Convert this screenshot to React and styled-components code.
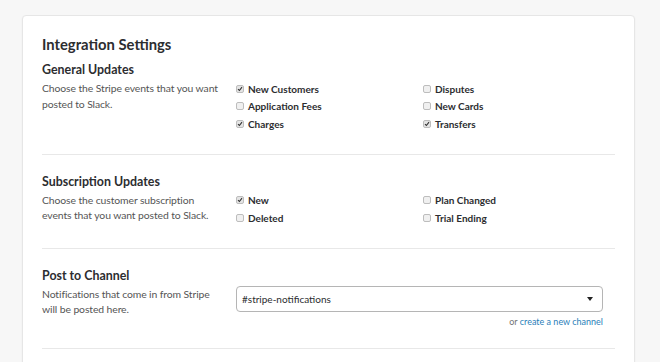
import React from "react";
import styled, { createGlobalStyle } from "styled-components";

const GlobalStyle = createGlobalStyle`
  html, body {
    margin: 0;
    padding: 0;
    background: #f7f7f7;
    font-family: Lato, "Liberation Sans", sans-serif;
    color: #2c2d30;
  }
`;

const Page = styled.div`
  padding: 15px 25px 0 22px;
  height: 362px;
  box-sizing: border-box;
  overflow: hidden;
`;

const Card = styled.div`
  width: 613px;
  box-sizing: border-box;
  background: #fff;
  border: 1px solid #e6e6e6;
  border-radius: 4px;
  box-shadow: 0 1px 2px rgba(0, 0, 0, 0.05);
  padding: 16px 19px 0 19px;
  min-height: 400px;
`;

const Title = styled.h1`
  margin: 0;
  font-size: 14.8px;
  line-height: 24px;
  font-weight: 700;
`;

const Section = styled.section`
  padding: ${(p) => (p.$first ? "4px" : "17px")} 0 ${(p) => p.$bottom || "21px"};
  border-bottom: 1px solid #e8e8e8;
`;

const SectionTitle = styled.h2`
  margin: 0;
  font-size: 12.4px;
  line-height: 20px;
  font-weight: 700;
`;

const Row = styled.div`
  display: grid;
  grid-template-columns: 194px 1fr;
`;

const Description = styled.p`
  margin: 1px 0 0;
  max-width: 176px;
  font-size: 10.4px;
  letter-spacing: -0.1px;
  line-height: 15.5px;
  color: #555;
`;

const Options = styled.div`
  display: grid;
  grid-template-columns: 187px 187px;
  grid-auto-rows: 17.5px;
`;

const Option = styled.label`
  display: flex;
  align-items: center;
  gap: 4px;
  font-size: 10px;
  font-weight: 700;
  color: #2c2d30;
`;

const Box = styled.span`
  width: 6px;
  height: 6px;
  border: 1px solid #bdbdbd;
  border-radius: 2px;
  background: ${(p) => (p.$checked ? "#e4e4e4" : "#f0f0f0")};
  display: flex;
  align-items: center;
  justify-content: center;
  flex-shrink: 0;
`;

const Check = () => (
  <svg width="6" height="6" viewBox="0 0 6 6">
    <path d="M1 3.2 L2.4 4.5 L5 1.2" fill="none" stroke="#333" strokeWidth="1.1" />
  </svg>
);

const Checkbox = ({ checked, children }) => (
  <Option>
    <Box $checked={checked}>{checked && <Check />}</Box>
    {children}
  </Option>
);

const ChannelField = styled.div`
  display: flex;
  flex-direction: column;
  align-items: flex-end;
  width: 367px;
`;

const Select = styled.div`
  width: 100%;
  height: 26px;
  box-sizing: border-box;
  border: 1px solid #b5b5b5;
  border-radius: 4px;
  display: flex;
  align-items: center;
  justify-content: space-between;
  padding: 0 9px 0 5px;
  font-size: 10px;
  color: #2c2d30;
`;

const Caret = styled.span`
  width: 0;
  height: 0;
  border-left: 3.5px solid transparent;
  border-right: 3.5px solid transparent;
  border-top: 4px solid #222;
  margin-top: 1px;
`;

const Hint = styled.div`
  margin-top: 3px;
  font-size: 9px;
  line-height: 14px;
  color: #717274;
`;

const Link = styled.a`
  color: #2a80b9;
  text-decoration: none;
`;

export default function App() {
  return (
    <>
      <GlobalStyle />
      <Page>
        <Card>
          <Title>Integration Settings</Title>
          <Section $first>
            <SectionTitle>General Updates</SectionTitle>
            <Row>
              <Description>
                Choose the Stripe events that you want posted to Slack.
              </Description>
              <Options>
                <Checkbox checked>New Customers</Checkbox>
                <Checkbox>Disputes</Checkbox>
                <Checkbox>Application Fees</Checkbox>
                <Checkbox>New Cards</Checkbox>
                <Checkbox checked>Charges</Checkbox>
                <Checkbox checked>Transfers</Checkbox>
              </Options>
            </Row>
          </Section>
          <Section>
            <SectionTitle>Subscription Updates</SectionTitle>
            <Row>
              <Description>
                Choose the customer subscription events that you want posted to Slack.
              </Description>
              <Options>
                <Checkbox checked>New</Checkbox>
                <Checkbox>Plan Changed</Checkbox>
                <Checkbox>Deleted</Checkbox>
                <Checkbox>Trial Ending</Checkbox>
              </Options>
            </Row>
          </Section>
          <Section $bottom="19px">
            <SectionTitle>Post to Channel</SectionTitle>
            <Row>
              <Description>
                Notifications that come in from Stripe will be posted here.
              </Description>
              <ChannelField>
                <Select>
                  #stripe-notifications
                  <Caret />
                </Select>
                <Hint>
                  or <Link href="#">create a new channel</Link>
                </Hint>
              </ChannelField>
            </Row>
          </Section>
        </Card>
      </Page>
    </>
  );
}
